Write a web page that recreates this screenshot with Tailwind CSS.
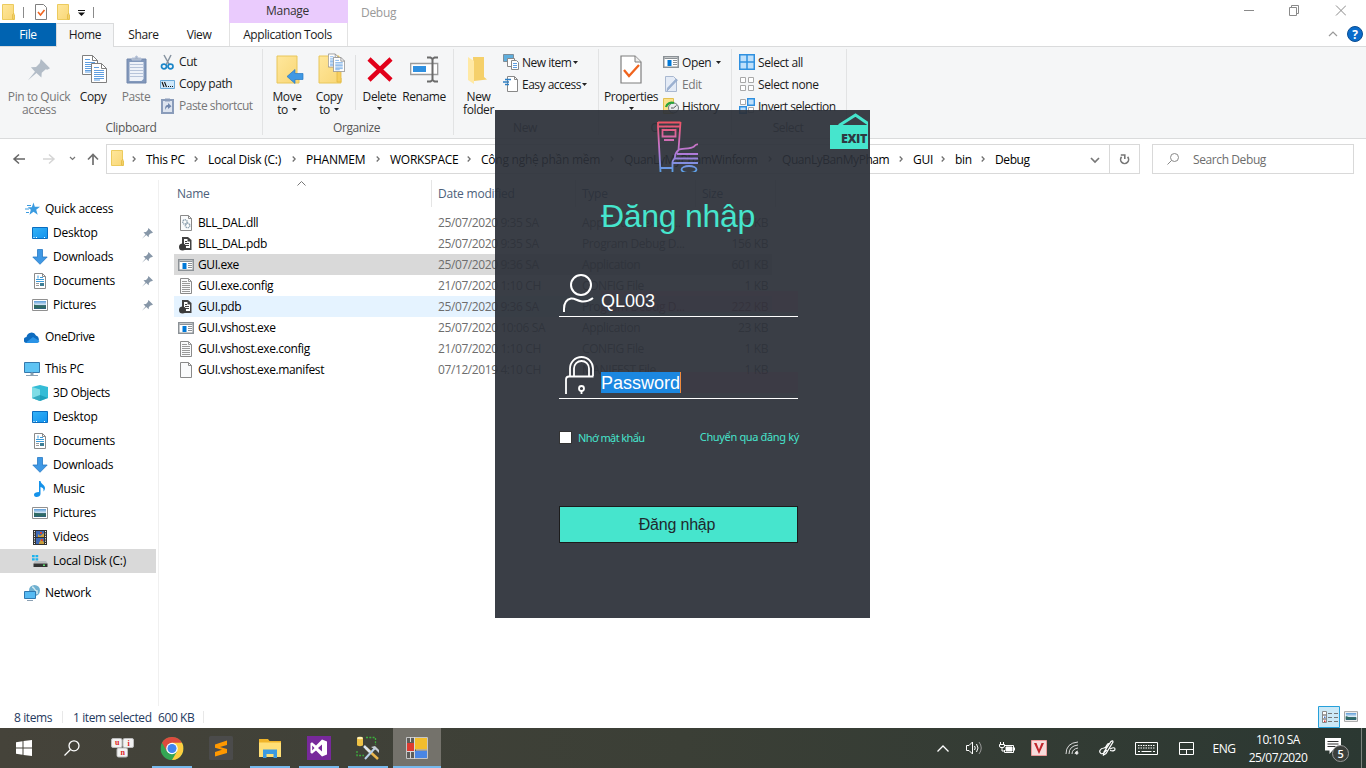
<!DOCTYPE html>
<html lang="vi">
<head>
<meta charset="utf-8">
<title>Debug</title>
<script src="https://cdn.jsdelivr.net/npm/@tailwindcss/browser@4"></script>
</head>
<body class="relative w-[1366px] h-[768px] overflow-hidden bg-white font-['Open_Sans','Noto_Sans',sans-serif] text-[12px] leading-[13px] tracking-[-0.25px] text-[#1a1a1a] flex flex-col whitespace-nowrap">
<svg class="absolute w-0 h-0">
  <defs>
    <linearGradient id="fold" x1="0" y1="0" x2="1" y2="1"><stop offset="0" stop-color="#ffe79c"/><stop offset="1" stop-color="#f8d675"/></linearGradient>
    <linearGradient id="scr" x1="0" y1="0" x2="1" y2="1"><stop offset="0" stop-color="#35b3f7"/><stop offset="1" stop-color="#1292ee"/></linearGradient>
    <linearGradient id="sky" x1="0" y1="0" x2="0" y2="1"><stop offset="0" stop-color="#5b9bd8"/><stop offset=".5" stop-color="#dbeaf5"/><stop offset=".55" stop-color="#3c7078"/><stop offset="1" stop-color="#2d5d80"/></linearGradient>
    <linearGradient id="brand" gradientUnits="userSpaceOnUse" x1="0" y1="0" x2="0" y2="50"><stop offset="0" stop-color="#f0525f"/><stop offset=".4" stop-color="#d06fb8"/><stop offset=".65" stop-color="#b17ad9"/><stop offset="1" stop-color="#5d9fe6"/></linearGradient>
  </defs>
  <symbol id="folder" viewBox="0 0 13 16"><path d="M.5.5h11v10.500h1v4.500H.5z" fill="url(#fold)" stroke="#eccb5e"/><path d="M10.500 15v-4.500l1.500-1v6z" fill="#fbe18c" stroke="#e3b93f" stroke-width=".8"/></symbol>
  <symbol id="page" viewBox="0 0 12 16"><path d="M.5.5h8l3 3v12H.5z" fill="#fafbfc" stroke="#8a8a8a"/><path d="M8.500.5v3h3" fill="none" stroke="#8a8a8a"/></symbol>
  <symbol id="config" viewBox="0 0 12 16"><path d="M.5.5h8l3 3v12H.5z" fill="#fafbfc" stroke="#8a8a8a"/><path d="M8.500.5v3h3M2 3.500h5M2 5.500h8M2 7.500h8M2 9.500h8M2 11.500h8M2 13.500h8" fill="none" stroke="#9a9a9a"/></symbol>
  <symbol id="dll" viewBox="0 0 12 16"><path d="M.5.5h8l3 3v12H.5z" fill="#fafbfc" stroke="#8a8a8a"/><path d="M8.500.5v3h3" fill="none" stroke="#8a8a8a"/><circle cx="5" cy="7" r="2.200" fill="none" stroke="#8fa2b0" stroke-width="1.500" stroke-dasharray="1.200 .6"/><circle cx="7.600" cy="10.500" r="2.200" fill="none" stroke="#8fa2b0" stroke-width="1.500" stroke-dasharray="1.200 .6"/></symbol>
  <symbol id="pdb" viewBox="0 0 13 14"><path d="M3 0h6l3.500 3v10H6l-3-4z" fill="#424242"/><path d="M5 2h3.500v2.500H11V11H6.500L5 8z" fill="#fff"/><path d="M6 4.500h2M6 6.500h4M6 8.500h4" stroke="#424242"/><circle cx="3.500" cy="10" r="3.500" fill="#3a3a3a"/></symbol>
  <symbol id="exe" viewBox="0 0 16 12"><path d="M.75.75h14.500v10.500H.75z" fill="#fff" stroke="#8b9196" stroke-width="1.500"/><path d="M1.500 2.500h13" stroke="#8b9196"/><path d="M4.500 4h4v6h-4z" fill="#0078d7"/><path d="M10 4.500h4M10 6.500h4M10 8.500h4" stroke="#8b9196"/></symbol>
  <symbol id="desk" viewBox="0 0 16 12"><path d="M.5.5h15v11H.5z" fill="url(#scr)" stroke="#0a6dc0"/><path d="M1.500 10.500h13" stroke="#fff" stroke-dasharray="1 1.500 1 7 1 1.500"/></symbol>
  <symbol id="down" viewBox="0 0 16 16"><path d="M5.500.5h5V8h4.700L8 15.300.8 8h4.700z" fill="#3f98e4" stroke="#2779c4" stroke-width=".8"/></symbol>
  <symbol id="docs" viewBox="0 0 12 16"><path d="M.5.5h8l3 3v12H.5z" fill="#fff" stroke="#8a8a8a"/><path d="M8.500.5v3h3" fill="none" stroke="#8a8a8a"/><path d="M2 6.500h8M2 8.500h8M4 2.500v3M6 4.500h3" stroke="#3b9ad9" fill="none"/><path d="M2 10.500h3M2 12.500h3" stroke="#9a9a9a"/><path d="M6 10h4v3H6z" fill="#3f7f96"/></symbol>
  <symbol id="pics" viewBox="0 0 16 12"><path d="M.5.5h15v11H.5z" fill="#fff" stroke="#909090"/><path d="M2 2h12v8H2z" fill="url(#sky)"/><path d="M2 5.500l5 1.500 7 .5V9l-7 .3L2 9z" fill="#2f6b63"/></symbol>
  <symbol id="pin" viewBox="0 0 12 12"><path d="M7 0l5 5-1.500.8-.8-.2L7.500 7.500l-.2 2.600L4.600 7.600 0 11.600 3.800 7 1.600 4.500l2.800-.2 2-2z" fill="#8797a8"/></symbol>
  <symbol id="tri" viewBox="0 0 5 3"><path d="M0 0h5L2.500 3z" fill="#222"/></symbol>
  <symbol id="chev" viewBox="0 0 4 6"><path d="M.7.500L3.200 3 .7 5.500" fill="none" stroke="#707070" stroke-width="1.300"/></symbol>
  <symbol id="sheet" viewBox="0 0 16 20"><path d="M.5.500h10l5 5v14H.5z" fill="#fff" stroke="#7f7f7f"/><path d="M10.500.5v5h5" fill="none" stroke="#7f7f7f"/><path d="M3 4.500h5M3 7.500h10M3 9.500h10M3 11.500h10M3 13.500h10M3 15.500h10M3 17h6" stroke="#5f9ee0"/></symbol>
</svg>

<!-- title bar -->
<header class="flex h-[23px] shrink-0">
  <div class="flex items-center w-[229px] pl-[2px] pt-px">
    <svg class="w-[13px] h-4"><use href="#folder"/></svg>
    <i class="w-px h-[11px] bg-[#8a8a8a] ml-2"></i>
    <svg class="w-3 h-4 ml-[11px]" viewBox="0 0 12 16"><path d="M.5.5h8l3 3v12H.5z" fill="#fff" stroke="#7f7f7f"/><path d="M3 8l2.500 3 4-5" fill="none" stroke="#f0641e" stroke-width="1.600"/></svg>
    <svg class="w-[13px] h-4 ml-[10px]"><use href="#folder"/></svg>
    <svg class="w-[7px] h-[6px] ml-2 mt-0.5" viewBox="0 0 7 6"><path d="M0 .5h7" stroke="#111"/><path d="M0 2.500h7L3.500 6z" fill="#111"/></svg>
    <i class="w-px h-[11px] bg-[#8a8a8a] ml-[8px]"></i>
  </div>
  <div class="w-[119px] bg-[#eacbfd] text-center pt-[4px] pr-0.5 tracking-[-0.3px] text-[#333]">Manage</div>
  <div class="pl-[13px] pt-[6px] text-[#999] tracking-[-0.3px]">Debug</div>
  <svg class="ml-auto mr-[20px] mt-[5px] w-[102px] h-[11px]" viewBox="0 0 102 11" fill="none" stroke="#8a8a8a"><path d="M0 5.500h10M45.500 2.500h7v8h-7zM47.500 2V.5h7v8H53M92 .5l10 10M102 .5l-10 10"/></svg>
</header>

<!-- ribbon tabs -->
<nav class="flex h-[23px] shrink-0 text-center leading-[24px] tracking-[-0.4px]">
  <div class="w-14 bg-[#0063b1] text-white">File</div>
  <div class="w-[58px] bg-[#f5f6f7] border border-b-0 border-[#dadbdc] h-6 leading-[22px] z-10">Home</div>
  <div class="w-[58px] pl-px">Share</div>
  <div class="w-[57px] pr-[3px]">View</div>
  <div class="w-[119px] pr-[2px] border-x border-[#e2e2e2]">Application Tools</div>
  <svg class="ml-auto mr-[3px] mt-[3px] w-[35px] h-4" viewBox="0 0 35 16"><path d="M1 10l4-4 4 4" fill="none" stroke="#999" stroke-width="1.200"/><circle cx="27" cy="8" r="7.500" fill="#0a6ccb" stroke="#0a4d92"/><text x="27" y="12.500" text-anchor="middle" fill="#fff" font-size="12" font-weight="700">?</text></svg>
</nav>

<!-- ribbon -->
<section class="flex h-[93px] shrink-0 bg-[#f5f6f7] border-y border-[#dadbdc] pt-[2px] tracking-[-0.4px]">
  <div class="w-[263px] h-[86px] border-r border-[#e2e3e4] flex flex-col">
    <div class="flex h-[73px]">
      <div class="w-[78px] flex flex-col items-center text-[#777] text-center">
        <svg class="w-[22px] h-[22px] mt-[10px] mb-[9px] opacity-60"><use href="#pin" width="22" height="22"/></svg>Pin to Quick<br>access</div>
      <div class="w-[30px] flex flex-col items-center">
        <svg class="w-[25px] h-[29px] mt-[6px] mb-[6px] ml-[3px]"><use href="#sheet" width="16" height="20"/><use href="#sheet" x="9" y="8" width="16" height="20"/></svg>Copy</div>
      <div class="w-[52px] ml-[2px] flex flex-col items-center text-[#777]">
        <svg class="w-[21px] h-[29px] mt-[6px] mb-[6px]" viewBox="0 0 21 29"><path d="M1 4h19v24H1z" fill="#8298bb" stroke="#7288ad"/><path d="M3.500 7h14v17l-2 2h-12z" fill="#eef2f9"/><path d="M6 5h9V3h-3l-1-2h-1L9 3H6zM4 9.500h13M4 12.500h13M4 15.500h13M4 18.500h13M4 21.500h13" stroke="#b7c4da" fill="#a6b3c8"/></svg>Paste</div>
      <div class="flex flex-col pt-[2px] leading-[22px] -ml-[2px]">
        <div class="flex items-center h-[22px] gap-[4px]"><svg class="w-[15px] h-4" viewBox="0 0 15 16" fill="none"><path d="M4 1l5.500 10M11 1L6 11" stroke="#8793a0" stroke-width="1.500"/><ellipse cx="4" cy="12.500" rx="2.500" ry="2.300" stroke="#1b86c8" stroke-width="1.700"/><ellipse cx="10.500" cy="12.500" rx="2.500" ry="2.300" stroke="#1b86c8" stroke-width="1.700"/></svg>Cut</div>
        <div class="flex items-center h-[22px] gap-[4px]"><svg class="w-[15px] h-[9px]" viewBox="0 0 15 9"><path d="M.5.500h14v8H.5z" fill="#cfe8fa" stroke="#6aa9d8"/><path d="M2 2l2 5M4.500 2l2 5" stroke="#111" stroke-width="1.100"/><path d="M8 6.500h5.500" stroke="#111" stroke-dasharray="1 1"/></svg>Copy path</div>
        <div class="flex items-center h-[22px] gap-[4px] text-[#777]"><svg class="w-[15px] h-4" viewBox="0 0 15 16"><path d="M2 2h11v13H2z" fill="#dde4ef" stroke="#8a9cba" stroke-width="2"/><path d="M5 .500h5v3H5z" fill="#8a9cba"/><path d="M5 12c0-4 1-5 3-5V5l3.500 3.200L8 11V9c-1.500 0-2 1-3 3z" fill="#7187ad"/></svg><span class="tracking-[-0.5px]">Paste shortcut</span></div>
      </div>
    </div>
    <div class="text-center text-[#555] leading-[14px] pt-px">Clipboard</div>
  </div>
  <div class="w-[191px] h-[86px] border-r border-[#e2e3e4] flex flex-col">
    <div class="flex h-[73px] text-center">
      <div class="w-[48px] flex flex-col items-center">
        <svg class="w-[28px] h-[29px] mt-[6px] mb-[6px] ml-[5px]" viewBox="0 0 28 29"><path d="M1 1h20v22h2v5H1z" fill="url(#fold)" stroke="#e8c65a"/><path d="M11 21.500l8-7v4h8v6h-8v4z" fill="#3f98e4" stroke="#2779c4" stroke-width=".7"/></svg>Move<div class="flex items-center gap-1">to <svg class="w-[5px] h-[3px]"><use href="#tri"/></svg></div></div>
      <div class="w-[36px] flex flex-col items-center">
        <svg class="w-[27px] h-[31px] mt-[4px] mb-[6px] ml-[5px]" viewBox="0 0 27 31"><path d="M1 3h20v22h2v5H1z" fill="url(#fold)" stroke="#e8c65a"/><path d="M19 29V19l4-2v12z" fill="#f7cf5f" stroke="#e2b945" stroke-width=".8"/><use href="#sheet" x="10" y="0" width="11" height="15"/><use href="#sheet" x="15" y="4" width="12" height="15"/></svg>Copy<div class="flex items-center gap-1">to <svg class="w-[5px] h-[3px]"><use href="#tri"/></svg></div></div>
      <div class="w-px h-[55px] mt-[6px] ml-[8px] bg-[#dfe0e1]"></div>
      <div class="w-[47px] flex flex-col items-center">
        <svg class="w-[26px] h-[25px] mt-[8px] mb-[8px]" viewBox="0 0 26 25"><path d="M2 2l22 21M24 2L2 23" stroke="#e2001a" stroke-width="4.500"/></svg>Delete<svg class="w-[5px] h-[3px] mt-[4px]"><use href="#tri"/></svg></div>
      <div class="w-[42px] flex flex-col items-center">
        <svg class="w-[29px] h-[27px] mt-[7px] mb-[7px]" viewBox="0 0 29 27" fill="none"><path d="M.7 7.500h27v11H.7z" fill="#fff" stroke="#9a9a9a" stroke-width="1.300"/><path d="M3 10h13v6H3z" fill="#2f90e0"/><path d="M17 1.500h3.500l2 1.500 2-1.500H28M17 25.500h3.500l2-1.500 2 1.500H28M22.500 3v21" stroke="#6b6b6b" stroke-width="2"/></svg>Rename</div>
    </div>
    <div class="text-center text-[#555] leading-[14px] pt-px pr-[3px]">Organize</div>
  </div>
  <div class="w-[145px] h-[86px] border-r border-[#e2e3e4] flex flex-col">
    <div class="flex h-[73px] text-center">
      <div class="w-[49px] flex flex-col items-center">
        <svg class="w-[19px] h-[27px] mt-[8px] mb-[6px] mr-[3px]" viewBox="0 0 19 27"><path d="M5 0h11v20l3 2.500L6 24z" fill="#f5d06a"/><path d="M0 0l6 4v23l-6-4z" fill="#ffe9a5"/></svg>New<br>folder</div>
      <div class="flex flex-col pt-[2px] text-left">
        <div class="flex items-center h-[22px] gap-[3px]"><svg class="w-4 h-4" viewBox="0 0 16 16"><path d="M.5.500h10v7H.5z" fill="#5faedd" stroke="#7d8d99"/><path d="M4.500 4.500h7v8h-7z" fill="#fff" stroke="#888"/><path d="M8.500 6.500h5l2 2v7h-7z" fill="#fff" stroke="#888"/><path d="M10 9.500h4M10 11.500h4M10 13.500h4" stroke="#5f9ee0"/></svg><span class="tracking-[-0.7px] w-[48px]"><span class="tracking-[-0.5px]">New item</span></span> <svg class="w-[5px] h-[3px]"><use href="#tri"/></svg></div>
        <div class="flex items-center h-[22px] gap-[3px]"><svg class="w-4 h-4" viewBox="0 0 16 16"><path d="M4.500.5h7l3 3v12h-10z" fill="#fff" stroke="#888"/><path d="M11.500.5v3h3" fill="none" stroke="#888"/><path d="M2 3.500h6M0 6h6M2 8.500h4" stroke="#2d7fc4" stroke-width="1.300"/></svg><span class="w-[57px] tracking-[-0.5px]">Easy access</span> <svg class="w-[5px] h-[3px]"><use href="#tri"/></svg></div>
      </div>
    </div>
    <div class="text-center text-[#555] leading-[14px] pt-px pr-[2px]">New</div>
  </div>
  <div class="w-[133px] h-[86px] border-r border-[#e2e3e4] flex flex-col">
    <div class="flex h-[73px]">
      <div class="w-[64px] flex flex-col items-center">
        <svg class="w-[22px] h-[29px] mt-[6px] mb-[6px]" viewBox="0 0 22 29"><path d="M1 1h14l6 6v21H1z" fill="#fff" stroke="#7f7f7f" stroke-width="1.200"/><path d="M15 1v6h6" fill="#eee" stroke="#7f7f7f"/><path d="M4 15l5 6 10-11" fill="none" stroke="#f0641e" stroke-width="2.300"/></svg>Properties<svg class="w-[5px] h-[3px] mt-[4px]"><use href="#tri"/></svg></div>
      <div class="flex flex-col pt-[2px]">
        <div class="flex items-center h-[22px] gap-[3px]"><svg class="w-4 h-3"><use href="#exe"/></svg>Open <svg class="w-[5px] h-[3px] ml-[2px]"><use href="#tri"/></svg></div>
        <div class="flex items-center h-[22px] gap-[3px] text-[#777]"><svg class="w-4 h-4" viewBox="0 0 16 16"><path d="M2.500.5h8l3 3v12h-11z" fill="#e4ebf6" stroke="#a9b8d0"/><path d="M14.500 4L6 13l-2 2 .5-3L13 3z" fill="#9db2d2" stroke="#8ba3c6" stroke-width=".6"/></svg>Edit</div>
        <div class="flex items-center h-[22px] gap-[3px]"><svg class="w-4 h-4" viewBox="0 0 16 16"><path d="M.5.5h10v15H.5z" fill="#fbe08a" stroke="#e3c04f"/><circle cx="10.500" cy="10" r="5" fill="#e8ecee" stroke="#6f7a80"/><path d="M3 9a6 6 0 018-4" fill="none" stroke="#27a33c" stroke-width="2.200"/><path d="M10.500 10l3-2.500M8 10h2.500" stroke="#555"/></svg>History</div>
      </div>
    </div>
    <div class="text-center text-[#555] leading-[14px] pt-px">Open</div>
  </div>
  <div class="w-[115px] h-[86px] border-r border-[#e2e3e4] flex flex-col">
    <div class="flex flex-col pt-[2px] h-[73px] pl-[7px]">
      <div class="flex items-center h-[22px] gap-[3px]"><svg class="w-4 h-4" viewBox="0 0 16 16"><path d="M.75.75h14.500v14.500H.75zM8 1v14M1 8h14" fill="#bfe0fb" stroke="#2f90e0" stroke-width="1.500"/></svg>Select all</div>
      <div class="flex items-center h-[22px] gap-[3px]"><svg class="w-4 h-4" viewBox="0 0 16 16"><path d="M1.500 1.500h5v5h-5zM9.500 1.500h5v5h-5zM1.500 9.500h5v5h-5zM9.500 9.500h5v5h-5z" fill="#fff" stroke="#a8a8a8"/></svg>Select none</div>
      <div class="flex items-center h-[22px] gap-[3px]"><svg class="w-4 h-4" viewBox="0 0 16 16"><path d="M1.500 1.500h5v5h-5zM9.500 9.500h5v5h-5z" fill="#fff" stroke="#a8a8a8"/><path d="M8.700.7h6.600v6.600H8.700zM.7 8.700h6.600v6.600H.7z" fill="#bfe0fb" stroke="#2f90e0" stroke-width="1.400"/></svg><span class="tracking-[-0.5px]">Invert selection</span></div>
    </div>
    <div class="text-center text-[#555] leading-[14px] pt-px pr-[2px]">Select</div>
  </div>
</section>

<!-- address bar -->
<section class="flex h-[41px] shrink-0 pt-[5px]">
  <svg class="w-[106px] h-[30px]" viewBox="0 0 106 30" fill="none"><path d="M14 15h11M19 10.500L14 15l5 4.500" stroke="#666" stroke-width="1.500"/><path d="M43 15h11M49 10.500l5 4.500-5 4.500" stroke="#d5d5d5" stroke-width="1.500"/><path d="M70 13l2.500 2.500L75 13" stroke="#777" stroke-width="1.200"/><path d="M93 21V11M88 15.500l5-5 5 5" stroke="#707070" stroke-width="1.700"/></svg>
  <div class="w-[1034px] h-[30px] border border-[#d9d9d9] flex items-center text-black">
    <svg class="w-[13px] h-4 ml-[4px] -mt-[2px] shrink-0"><use href="#folder"/></svg>
    <svg class="w-1 h-[6px] ml-2 mr-[10px] shrink-0"><use href="#chev"/></svg>
    <div class="w-[62px] shrink-0 flex items-center justify-between pr-[10px]"><span>This PC</span><svg class="w-1 h-[6px]"><use href="#chev"/></svg></div>
    <div class="w-[98px] shrink-0 flex items-center justify-between pr-[10px]"><span>Local Disk (C:)</span><svg class="w-1 h-[6px]"><use href="#chev"/></svg></div>
    <div class="w-[84px] shrink-0 flex items-center justify-between pr-[10px]"><span>PHANMEM</span><svg class="w-1 h-[6px]"><use href="#chev"/></svg></div>
    <div class="w-[91px] shrink-0 flex items-center justify-between pr-[10px]"><span>WORKSPACE</span><svg class="w-1 h-[6px]"><use href="#chev"/></svg></div>
    <div class="w-[143px] shrink-0 flex items-center justify-between pr-[10px]"><span>Công nghệ phần mềm</span><svg class="w-1 h-[6px]"><use href="#chev"/></svg></div>
    <div class="w-[158px] shrink-0 flex items-center justify-between pr-[10px]"><span class="tracking-[-0.4px]">QuanLyMyPhamWinform</span><svg class="w-1 h-[6px]"><use href="#chev"/></svg></div>
    <div class="w-[131px] shrink-0 flex items-center justify-between pr-[10px]"><span class="tracking-[-0.45px]">QuanLyBanMyPham</span><svg class="w-1 h-[6px]"><use href="#chev"/></svg></div>
    <div class="w-[42px] shrink-0 flex items-center justify-between pr-[10px]"><span>GUI</span><svg class="w-1 h-[6px]"><use href="#chev"/></svg></div>
    <div class="w-[40px] shrink-0 flex items-center justify-between pr-[10px]"><span>bin</span><svg class="w-1 h-[6px]"><use href="#chev"/></svg></div>
    <span class="tracking-[-0.4px]">Debug</span>
    <svg class="ml-auto w-[49px] h-[28px] shrink-0" viewBox="0 0 49 28" fill="none"><path d="M1 13l4 4 4-4" stroke="#777" stroke-width="1.700"/><path d="M19.500 0v28" stroke="#d9d9d9"/><path d="M31.600 11.900a4 4 0 106 0M30.800 10h4v4" stroke="#777" stroke-width="1.600"/></svg>
  </div>
  <div class="w-[202px] h-[30px] ml-3 border border-[#d9d9d9] flex items-center text-[#6d6d6d]">
    <svg class="w-3 h-3 ml-[14px] mr-[14px]" viewBox="0 0 12 12" fill="none" stroke="#888"><circle cx="7.500" cy="4.500" r="4"/><path d="M4.500 7.500L.5 11.500"/></svg><span class="tracking-[-0.4px]">Search Debug</span>
  </div>
</section>

<!-- main area -->
<main class="flex h-[526px] shrink-0 text-black">
  <aside class="w-[159px] border-r border-[#f0f0f0] pt-[17px] [&>div]:h-6 [&>div]:flex [&>div]:items-center [&>div]:pb-[2px] [&_svg]:translate-y-px">
    <div class="pl-[25px] gap-[5px]"><svg class="w-[15px] h-[14px]" viewBox="0 0 15 14"><path d="M8.500.5l1.300 4.200H15l-3.800 3 1.500 5-4.200-3-4 3 1.300-5-3-2.500h4z" fill="#3a9be0"/><path d="M2 3.500h4M0 7h4M1 10.500h3" stroke="#3a9be0" stroke-width="1.200"/></svg>Quick access</div>
    <div class="pl-8 gap-[5px]"><svg class="w-4 h-3"><use href="#desk"/></svg>Desktop<svg class="w-[11px] h-[11px] ml-auto mr-[5px]" viewBox="0 0 12 12"><use href="#pin" width="12" height="12"/></svg></div>
    <div class="pl-8 gap-[5px]"><svg class="w-4 h-4"><use href="#down"/></svg>Downloads<svg class="w-[11px] h-[11px] ml-auto mr-[5px]" viewBox="0 0 12 12"><use href="#pin" width="12" height="12"/></svg></div>
    <div class="pl-[34px] gap-[7px]"><svg class="w-3 h-4"><use href="#docs"/></svg>Documents<svg class="w-[11px] h-[11px] ml-auto mr-[5px]" viewBox="0 0 12 12"><use href="#pin" width="12" height="12"/></svg></div>
    <div class="pl-8 gap-[5px]"><svg class="w-4 h-3"><use href="#pics"/></svg>Pictures<svg class="w-[11px] h-[11px] ml-auto mr-[5px]" viewBox="0 0 12 12"><use href="#pin" width="12" height="12"/></svg></div>
    <div class="pl-6 gap-[5px] mt-2"><svg class="w-4 h-[11px]" viewBox="0 0 16 11"><path d="M3 11a3 3 0 01-.5-6A5 5 0 0112 3.500a4 4 0 01.5 7.500z" fill="#0f6cbf"/><path d="M2 10.500L9 5l6.500 4a3 3 0 01-3 2H3z" fill="#2a93e6"/></svg><span class="tracking-[-0.4px]">OneDrive</span></div>
    <div class="pl-6 gap-[5px] mt-2"><svg class="w-4 h-[15px]" viewBox="0 0 16 15"><path d="M.5.5h15v10H.5z" fill="#5ec3f3" stroke="#3579ad"/><path d="M7 11h2v2H7zM2 13.500h12" fill="#8aa" stroke="#8ba0b3"/></svg>This PC</div>
    <div class="pl-8 gap-[5px]"><svg class="w-4 h-4" viewBox="0 0 16 16"><path d="M0 2l8-2 8 2v11l-8 3-8-3z" fill="#34bcd6"/><path d="M0 2l8 2.500V16l-8-3z" fill="#7fdde6"/><path d="M0 13l8-3 8 3-8 3z" fill="#1596b0" opacity=".7"/></svg><span class="tracking-[-0.4px]">3D Objects</span></div>
    <div class="pl-8 gap-[5px]"><svg class="w-4 h-3"><use href="#desk"/></svg>Desktop</div>
    <div class="pl-[34px] gap-[7px]"><svg class="w-3 h-4"><use href="#docs"/></svg>Documents</div>
    <div class="pl-8 gap-[5px]"><svg class="w-4 h-4"><use href="#down"/></svg>Downloads</div>
    <div class="pl-[34px] gap-[8px]"><svg class="w-[11px] h-4" viewBox="0 0 11 16"><path d="M5 0h1.500c.3 3 4.500 4 4.500 7 0 2-1 3-1.500 3.500C10 7.500 8.500 6.500 6.500 6v7c0 2-2 3-4 3S0 14.800 0 13.500C0 12 2 11 5 11z" fill="#1492ea"/></svg>Music</div>
    <div class="pl-8 gap-[5px]"><svg class="w-4 h-3"><use href="#pics"/></svg>Pictures</div>
    <div class="pl-[33px] gap-[6px]"><svg class="w-[14px] h-[15px]" viewBox="0 0 14 15"><path d="M0 0h14v15H0z" fill="#333"/><path d="M1.500 1v13M12.500 1v13" stroke="#eee" stroke-dasharray="1.200 1.200"/><path d="M3 1h8v6H3zM3 8h8v6H3z" fill="#3d68b5"/><path d="M5 4l2 2 4-3v4H5zM6 13l2-4 3 3v2H6z" fill="#c9a13d"/><path d="M7 2h2v2H7zM8 9h2v2H8z" fill="#d8432e"/></svg>Videos</div>
    <div class="pl-8 gap-[5px] bg-[#d9d9d9] mr-[2px]"><svg class="w-4 h-[13px]" viewBox="0 0 16 13"><path d="M0 0h2.700v2.300H0zM3.500 0h2.700v2.300H3.500zM0 3.200h2.700v2.300H0zM3.500 3.200h2.700v2.300H3.500z" fill="#1cb3ee"/><path d="M3 6h11l1.500 2.500h-14z" fill="#b9bdc0"/><path d="M1.500 8.500h14V12h-14z" fill="#333"/><path d="M11 9.500h2v1.500h-2z" fill="#5fe070"/></svg>Local Disk (C:)</div>
    <div class="pl-6 gap-[5px] mt-2"><svg class="w-4 h-4" viewBox="0 0 16 16"><circle cx="10.500" cy="5.500" r="5.500" fill="#6fb0d0"/><path d="M8 2c3 0 2 4 5 4v3" fill="none" stroke="#cfe8f0" stroke-width="1.500"/><path d="M.5 6.500h11v7H.5z" fill="#56baf2" stroke="#2f78b0"/><path d="M3 15.500h6" stroke="#8ba0b3"/></svg>Network</div>
  </aside>
  <div class="pl-[15px]">
    <div class="h-8 flex items-start text-[#4c607a]">
      <div class="w-[258px] h-[27px] border-r border-[#e5e5e5] pl-[3px] flex items-center relative">Name<svg class="absolute left-[123px] top-px w-[9px] h-[5px]" viewBox="0 0 9 5"><path d="M.5 4.500l4-4 4 4" fill="none" stroke="#777"/></svg></div>
      <div class="w-[144px] h-[27px] border-r border-[#e5e5e5] pl-[6px] flex items-center tracking-[-0.2px]">Date modified</div>
      <div class="w-[120px] h-[27px] border-r border-[#e5e5e5] pl-[6px] flex items-center">Type</div>
      <div class="w-[80px] h-[27px] border-r border-[#e5e5e5] pl-[6px] flex items-center">Size</div>
    </div>
    <div class="w-[598px] tracking-[-0.4px] [&>div]:h-[21px] [&>div]:grid [&>div]:grid-cols-[24px_240px_144px_124px_62px] [&>div]:items-center [&_span]:text-[#6d6d6d] [&_em]:not-italic [&_em]:text-right [&_em]:text-[#6d6d6d] [&_svg]:ml-[4px]">
      <div><svg class="w-3 h-4 translate-x-[2px]"><use href="#dll"/></svg><b class="font-normal">BLL_DAL.dll</b><span>25/07/2020 9:35 SA</span><span>Application exten...</span><em>77 KB</em></div>
      <div><svg class="w-[13px] h-[14px] translate-x-px"><use href="#pdb"/></svg><b class="font-normal">BLL_DAL.pdb</b><span>25/07/2020 9:35 SA</span><span>Program Debug D...</span><em>156 KB</em></div>
      <div class="bg-[#d9d9d9]"><svg class="w-4 h-3"><use href="#exe"/></svg><b class="font-normal">GUI.exe</b><span>25/07/2020 9:36 SA</span><span>Application</span><em>601 KB</em></div>
      <div><svg class="w-3 h-4 translate-x-[2px]"><use href="#config"/></svg><b class="font-normal">GUI.exe.config</b><span>21/07/2020 1:10 CH</span><span>CONFIG File</span><em>1 KB</em></div>
      <div class="bg-[#e5f3ff]"><svg class="w-[13px] h-[14px] translate-x-px"><use href="#pdb"/></svg><b class="font-normal">GUI.pdb</b><span>25/07/2020 9:36 SA</span><span>Program Debug D...</span><em>222 KB</em></div>
      <div><svg class="w-4 h-3"><use href="#exe"/></svg><b class="font-normal">GUI.vshost.exe</b><span>25/07/2020 10:06 SA</span><span>Application</span><em>23 KB</em></div>
      <div><svg class="w-3 h-4 translate-x-[2px]"><use href="#config"/></svg><b class="font-normal">GUI.vshost.exe.config</b><span>21/07/2020 1:10 CH</span><span>CONFIG File</span><em>1 KB</em></div>
      <div><svg class="w-3 h-4 translate-x-[2px]"><use href="#page"/></svg><b class="font-normal">GUI.vshost.exe.manifest</b><span>07/12/2019 4:10 CH</span><span>MANIFEST File</span><em>1 KB</em></div>
    </div>
  </div>
</main>

<!-- status bar -->
<footer class="flex h-[22px] shrink-0 items-center text-[#1f3a60] tracking-[-0.4px]">
  <span class="w-[48px] ml-[14px]">8 items</span><i class="w-px h-3 bg-[#e8e8e8]"></i>
  <span class="ml-[10px] w-[85px]">1 item selected</span><span class="w-[45px]">600 KB</span><i class="w-px h-3 bg-[#e8e8e8]"></i>
  <svg class="ml-auto mr-2 w-[40px] h-[22px]" viewBox="0 0 40 22"><path d="M.5.500h21v21H.5z" fill="#cbe8f6" stroke="#26a0da"/><path d="M4.500 5.500h4v3.500h-4zM4.500 9h4v4h-4zM4.500 13h4v3.500h-4z" fill="#fff" stroke="#888"/><path d="M10 7.500h4M16 7.500h4M10 11.500h4M16 11.500h4M10 15.500h4M16 15.500h4" stroke="#777"/><path d="M6 14.500h1.500v1.500H6z" fill="#d33"/><path d="M6 10.500h1.500V12H6z" fill="#47c"/><use href="#pics" x="26" y="5" width="14" height="11"/></svg>
</footer>

<!-- taskbar -->
<footer class="flex h-10 shrink-0 bg-linear-to-r from-[#45433a] via-[#3b3f36] to-[#2b3832] text-white [&>div]:flex [&>div]:items-center [&>div]:justify-center">
  <div class="w-12"><svg class="w-4 h-4" viewBox="0 0 16 16"><path d="M0 2.200l6.500-.9v6.200H0zM7.500 1.100L16 0v7.500H7.500zM0 8.500h6.500v6.200L0 13.800zM7.500 8.500H16V16l-8.500-1.100z" fill="#fff"/></svg></div>
  <div class="w-12"><svg class="w-4 h-4" viewBox="0 0 16 16" fill="none" stroke="#fff" stroke-width="1.300"><circle cx="10" cy="5.800" r="5"/><path d="M6.500 9.500L.5 15.500"/></svg></div>
  <div class="w-[49px] ml-[2px]"><svg class="w-[23px] h-5" viewBox="0 0 23 20"><g fill="#f2f2f2" stroke="#bbb"><rect x=".5" y=".5" width="10.500" height="9" rx="1.500"/><rect x="12" y=".5" width="10.500" height="9" rx="1.500"/><rect x="6" y="10" width="10.500" height="9" rx="1.500"/></g><g fill="#d22" font-size="8" font-weight="700" font-family="Liberation Serif" text-anchor="middle"><text x="6" y="7">u</text><text x="17.500" y="7.500">i</text><text x="11.500" y="16.500">n</text></g></svg></div>
  <div class="w-[49px] relative"><svg class="w-[23px] h-[23px] translate-x-[0.5px]" viewBox="0 0 24 24"><circle cx="12" cy="12" r="12" fill="#34a554"/><path d="M12 12L1.600 6A12 12 0 0122.400 6z" fill="#dd4b3e"/><path d="M1.600 6l5.200 9L12 12V6z" fill="#dd4b3e"/><path d="M12 6h10.400A12 12 0 0112 24l5.200-9z" fill="#fdcd40"/><circle cx="12" cy="12" r="6" fill="#fff"/><circle cx="12" cy="12" r="4.700" fill="#4285f0"/></svg><i class="absolute bottom-0 left-[5px] w-10 h-[2px] bg-[#76b9ed]"></i></div>
  <div class="w-[49px]"><svg class="w-6 h-6" viewBox="0 0 24 24"><rect width="24" height="24" rx="1.500" fill="#4b4b4b"/><path d="M6 8.500l12-4v4.500l-7 2 7 2v4L6 20.500V16l7-2.200-7-2z" fill="#ff9800"/></svg></div>
  <div class="w-[49px] relative"><svg class="w-[22px] h-[19px]" viewBox="0 0 22 19"><path d="M0 0h9l1.500 2H22v16H0z" fill="#f0b429"/><path d="M0 3.500h22V18H0z" fill="#ffdf76"/><path d="M4 19v-8.500h14V19h-3.500v-4h-7v4z" fill="#3b9ae0"/></svg><i class="absolute bottom-0 left-[5px] w-10 h-[2px] bg-[#76b9ed]"></i></div>
  <div class="w-[49px] relative"><svg class="w-6 h-6" viewBox="0 0 24 24"><path d="M0 0h24v24H0z" fill="#77299b"/><path fill-rule="evenodd" d="M15 3.500l5 2v13l-5 2-6-6-4 3.200-1.500-.9V7.200L5 6.300l4 3.200zM15 8.500L11 12l4 3.500zM5.200 9.500v5L7.500 12z" fill="#fff"/></svg><i class="absolute bottom-0 left-[5px] w-10 h-[2px] bg-[#76b9ed]"></i></div>
  <div class="w-[49px] relative"><svg class="w-6 h-6" viewBox="0 0 24 24" fill="none"><path d="M1 2v7c0 1.500 6 1.500 6 0V2z" fill="#efc245"/><ellipse cx="4" cy="2" rx="3" ry="1.300" fill="#fff0b0"/><path d="M10 1.500h9.500V9M1 15v4.500h7" stroke="#3cae3c" stroke-width="1.300" stroke-dasharray="2 1.300"/><path d="M10 12l12 11" stroke="#eab64c" stroke-width="2.500"/><path d="M8 10l6 6" stroke="#dde6ee" stroke-width="2.500"/><path d="M9 23l10-11" stroke="#b8d0e8" stroke-width="2"/><path d="M15 11l4-1 4 4v3l-3-3z" fill="#c7ced6"/></svg><i class="absolute bottom-0 left-[5px] w-10 h-[2px] bg-[#76b9ed]"></i></div>
  <div class="w-12 ml-px relative bg-[#74726b] border-b-2 border-[#76b9ed]"><svg class="w-[22px] h-[22px] mt-[2px]" viewBox="0 0 22 22"><path d="M.5.500h21v21H.5z" fill="#5d5d5a" stroke="#c5c5c5"/><path d="M9 1h12v11.500H9z" fill="#f2bd2c"/><path d="M1 6h7v8H1z" fill="#de3a30"/><path d="M9 14h12v7H9z" fill="#4a86e4"/><path d="M8.500 0v22M1 14.500h8M4.500 0v5M4.500 15v6M10 13h11" stroke="#d8d8d8"/></svg></div>
  <div class="w-[30px] ml-auto"><svg class="w-3 h-[7px]" viewBox="0 0 12 7"><path d="M.5 6.500l5.500-5.500 5.500 5.500" fill="none" stroke="#fff" stroke-width="1.300"/></svg></div>
  <div class="w-8"><svg class="w-4 h-3.5" viewBox="0 0 16 14" fill="none" stroke="#fff"><path d="M.5 4.500h2.500L6.500 1v12L3 9.500H.5zM8.500 5q1.500 2 0 4M10.500 3q3 4 0 8"/><path d="M13 1q4.500 6 0 12" stroke="#999"/></svg></div>
  <div class="w-[33px]"><svg class="w-4 h-3" viewBox="0 0 16 12" fill="none" stroke="#fff"><path d="M1.500 0v2M4.500 0v2M.5 2.500h5V4q0 1.500-1.500 1.500H2Q.5 5.500.5 4zM3 5.500V9h2M6 3.500h8.500v7h-9V8M15.500 5.500v3"/><path d="M7 5h6v4H7z" fill="#fff"/></svg></div>
  <div class="w-8"><svg class="w-4 h-4" viewBox="0 0 16 16"><path d="M.5.500h15v15H.5z" fill="#f7dcdc" stroke="#e99"/><path d="M3 3l5 11 5-11h-2.500L8 9.500 5.500 3z" fill="#c1272d"/></svg></div>
  <div class="w-[34px]"><svg class="w-3.5 h-3.5" viewBox="0 0 14 14" fill="none" stroke="#ddd"><path d="M1 13Q1 2 13 1M4 13Q4 5 13 4M7 13Q7 8 13 7M10 13q0-2.500 3-3"/><circle cx="11.800" cy="12" r="1.200" fill="#fff"/></svg></div>
  <div class="w-9"><svg class="w-[17px] h-4" viewBox="0 0 17 16" fill="none" stroke="#fff" stroke-width="1.200"><path d="M12 1.500q2-1.500 2 .5L7 13.500 4.500 15 5 12zM11 3.500C6 3 9 8 5 8S-.5 12 2 13.500 6 11 8 10M11 9q5-2.500 5 0t-5 1.500"/></svg></div>
  <div class="w-[42px]"><svg class="w-[23px] h-[13px]" viewBox="0 0 23 13" fill="none" stroke="#fff"><path d="M.5.500h22v12H.5z"/><path d="M3 3.500h17M3 6h17" stroke-dasharray="1.500 1"/><path d="M3 9.500h2M6.500 9.500h10M18 9.500h2"/></svg></div>
  <div class="w-[38px]"><svg class="w-[15px] h-[13px]" viewBox="0 0 15 13" fill="none" stroke="#fff"><path d="M.5.500h14v12H.5zM.5 7.500h14M7.500 7.500v5"/></svg></div>
  <div class="w-[38px] tracking-[-0.5px]">ENG</div>
  <div class="w-[70px] flex-col leading-[18px] pt-px tracking-[-0.5px]"><span>10:10 SA</span><span>25/07/2020</span></div>
  <div class="w-12"><svg class="w-6 h-6 mt-1" viewBox="0 0 24 24"><path d="M0 0h16v12.500H7.500L4.500 16v-3.500H0z" fill="#fff"/><path d="M2.500 3.500h11M2.500 6h11M2.500 8.500h8" stroke="#333"/><circle cx="15.500" cy="15.500" r="8" fill="#3b3f3b" stroke="#999"/><text x="15.500" y="19.500" text-anchor="middle" font-size="11" font-weight="600" fill="#fff">5</text></svg></div>
  <div class="w-[5px] border-l border-[#7d837e]"></div>
</footer>

<!-- login window -->
<section class="absolute left-[495px] top-[110px] w-[375px] h-[508px] bg-[#2b2f38]/93 flex flex-col font-['Liberation_Sans',sans-serif] tracking-[0px] z-20">
  <svg class="absolute left-[335px] top-[3px] w-[38px] h-9" viewBox="0 0 38 36"><path d="M0 12h38v24H0z" fill="#46e5cd"/><path d="M9 12.500L25.500 2 40 12" fill="none" stroke="#46e5cd" stroke-width="3"/><text x="11" y="30" font-family="Open Sans" font-weight="800" font-size="12.500" fill="#2e3a42" letter-spacing="-.4">EXIT</text></svg>
  <svg class="w-[41px] h-[51px] ml-[162px] mt-[11px]" viewBox="0 0 41 51" fill="none" stroke="url(#brand)" stroke-width="1.800"><path d="M1 1.500h22.500M1 5.500h22M1 1v5l2.500 45M23.500 1l-2 28M5.500 9h13v6.500h-13zM7 19h10M3.500 47h12M15.500 51v-9.500c0-3 2.500-3 2.500-6s1-4 3.500-6.500c3-2 12-.5 15.500-3.500 2-2 2-2.500 4-2M20 33h21M18 37.500h23M16 42h25"/><ellipse cx="32" cy="48.500" rx="7.500" ry="3.500"/></svg>
  <h1 class="ml-[106px] mt-[25px] text-[32px] leading-[38px] tracking-[-0.3px] text-[#46e5cd]">Đăng nhập</h1>
  <div class="ml-16 mt-[39px] w-[239px] h-[43px] border-b border-white flex">
    <svg class="w-[31px] h-[38px] ml-[4px]" viewBox="0 0 31 38" fill="none" stroke="#fff" stroke-width="2"><circle cx="18" cy="11" r="10"/><path d="M1 38V35Q1 26 8 24.500C12 24 14 27 19 27.500q6 .5 11-3.500"/></svg>
    <div class="ml-[7px] mt-[17px] w-[197px] h-[21px] bg-[#46303f]/20 text-white text-[18px] leading-[21px]">QL003</div>
  </div>
  <div class="ml-16 mt-[39px] w-[239px] h-[43px] border-b border-white flex">
    <svg class="w-[29px] h-[38px] ml-[6px]" viewBox="0 0 29 38" fill="none" stroke="#fff" stroke-width="1.800"><path d="M1 38V23.500q0-3 3-3h24.500M5 20v-7.500a11.500 11.500 0 0123 0V20M9 20v-7.500a7.500 7.500 0 0115 0V20"/><circle cx="16.500" cy="32.500" r="2.500"/><path d="M16.500 35v3"/></svg>
    <div class="ml-[7px] mt-[16px] w-[197px] h-[21px] bg-[#46303f]/20 text-white text-[18px] leading-[22px] flex"><span class="bg-[#1b87e0] border-r border-[#f08a3c] h-[21px] w-[80px]">Password</span></div>
  </div>
  <div class="ml-16 mt-[30px] w-[240px] h-4 flex items-center justify-between text-[#46e5cd] text-[11px] font-['Noto_Sans',sans-serif]">
    <span class="flex items-center gap-[6px] tracking-[-0.6px]"><i class="w-[13px] h-[13px] bg-white border border-[#333]"></i>Nhớ mật khẩu</span><span class="tracking-[-0.35px] -mt-0.5">Chuyển qua đăng ký</span>
  </div>
  <div class="ml-16 mt-[61px] w-[239px] h-[37px] bg-[#46e5cd] border border-[#1c1c1c] text-[#1f2a2e] text-[16px] leading-[35px] text-center pr-[3px] tracking-[-0.2px]">Đăng nhập</div>
</section>
</body>
</html>
